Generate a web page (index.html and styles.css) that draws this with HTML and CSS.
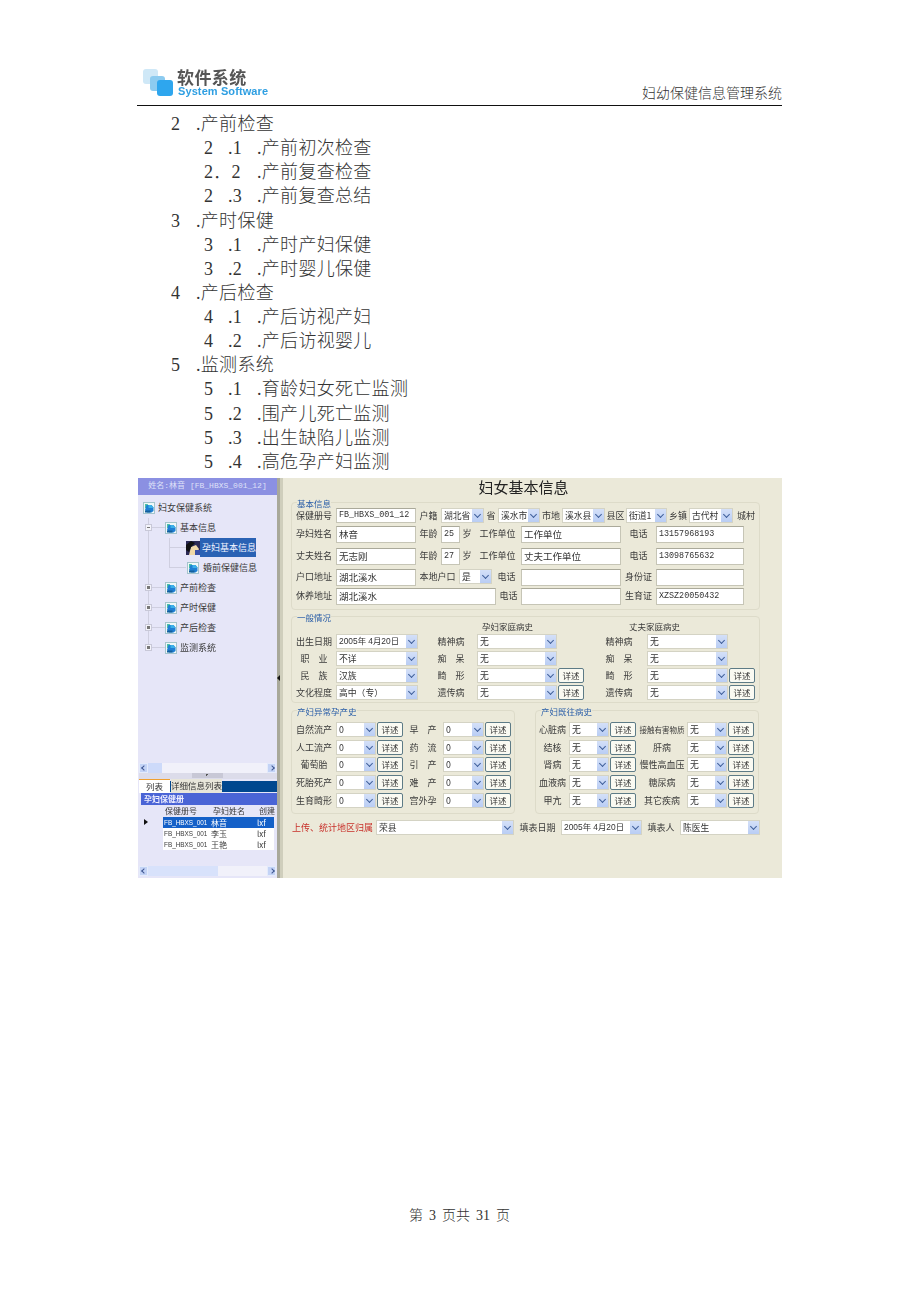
FILE: index.html
```html
<!DOCTYPE html>
<html>
<head>
    <meta charset="UTF-8">
    <title>妇幼保健信息管理系统</title>
    <link rel="stylesheet" href="styles.css">
</head>
<body>
<svg class="defs" width="0" height="0">
    <symbol id="node" viewBox="0 0 12 12">
        <rect x="0.5" y="0.5" width="11" height="11" fill="#f0f8f8" stroke="#a4c4cc"/>
        <path d="M2 2h3l-1 4h-2z" fill="#4cc0a8"/>
        <path d="M3.5 3h5l2 2.5v3.5l-2 1.5h-4.500l-2-2.500z" fill="#1f7fd4"/>
        <path d="M5.500 3h3l2 3h-5z" fill="#3bb0e8"/>
        <path d="M2 8.500h5.500v2h-5.500z" fill="#14609c"/>
    </symbol>
</svg>
<div class="page">
    <header class="top">
        <div class="logo">
            <svg class="logo-mark" width="30" height="28" viewBox="0 0 30 28">
                <rect x="0" y="0" width="15" height="15" rx="3" fill="#cfe8f7"/>
                <rect x="7" y="7" width="15" height="15" rx="3" fill="#8ccbf0"/>
                <rect x="14" y="11" width="16" height="16" rx="3" fill="#2ea6ee"/>
            </svg>
            <div class="logo-text">
                <div class="logo-cn">软件系统</div>
                <div class="logo-en">System Software</div>
            </div>
        </div>
        <div class="sys-name">妇幼保健信息管理系统</div>
    </header>

    <ul class="toc">
        <li class="lv1"><span class="no">2</span>.产前检查</li>
        <li class="lv2"><span class="no">2</span><span class="sec">.1</span>.产前初次检查</li>
        <li class="lv2"><span class="no-wide">2．2</span>.产前复查检查</li>
        <li class="lv2"><span class="no">2</span><span class="sec">.3</span>.产前复查总结</li>
        <li class="lv1"><span class="no">3</span>.产时保健</li>
        <li class="lv2"><span class="no">3</span><span class="sec">.1</span>.产时产妇保健</li>
        <li class="lv2"><span class="no">3</span><span class="sec">.2</span>.产时婴儿保健</li>
        <li class="lv1"><span class="no">4</span>.产后检查</li>
        <li class="lv2"><span class="no">4</span><span class="sec">.1</span>.产后访视产妇</li>
        <li class="lv2"><span class="no">4</span><span class="sec">.2</span>.产后访视婴儿</li>
        <li class="lv1"><span class="no">5</span>.监测系统</li>
        <li class="lv2"><span class="no">5</span><span class="sec">.1</span>.育龄妇女死亡监测</li>
        <li class="lv2"><span class="no">5</span><span class="sec">.2</span>.围产儿死亡监测</li>
        <li class="lv2"><span class="no">5</span><span class="sec">.3</span>.出生缺陷儿监测</li>
        <li class="lv2"><span class="no">5</span><span class="sec">.4</span>.高危孕产妇监测</li>
    </ul>

    <div class="shot">
        <aside class="side">
            <div class="side-title">姓名:林音 [FB_HBXS_001_12]</div>
            <div class="tree">
                <div class="node root"><svg class="ico"><use href="#node"/></svg>妇女保健系统</div>
                <div class="branches">
                    <div class="node"><i class="exp minus"></i><i class="dash"></i><svg class="ico"><use href="#node"/></svg>基本信息</div>
                    <div class="leaves">
                        <div class="node">
                            <i class="dash long"></i>
                            <svg class="photo" width="14" height="14" viewBox="0 0 14 14">
                                <rect width="14" height="14" fill="#2b2a55"/>
                                <path d="M3 14 L5 6 L10 4 L13 8 L10 14z" fill="#f0d8a8"/>
                                <path d="M0 4 L5 0 L9 2 L5 6 L3 11 L0 9z" fill="#111"/>
                                <path d="M9 9 L14 9 L14 14 L9 14z" fill="#3a4fa8"/>
                            </svg>
                            <span class="leaf on">孕妇基本信息</span>
                        </div>
                        <div class="node">
                            <i class="dash long"></i><svg class="ico"><use href="#node"/></svg>
                            <span class="leaf">婚前保健信息</span>
                        </div>
                    </div>
                    <div class="node"><i class="exp"></i><i class="dash"></i><svg class="ico"><use href="#node"/></svg>产前检查</div>
                    <div class="node"><i class="exp"></i><i class="dash"></i><svg class="ico"><use href="#node"/></svg>产时保健</div>
                    <div class="node"><i class="exp"></i><i class="dash"></i><svg class="ico"><use href="#node"/></svg>产后检查</div>
                    <div class="node"><i class="exp"></i><i class="dash"></i><svg class="ico"><use href="#node"/></svg>监测系统</div>
                </div>
            </div>
            <div class="hbar"><i class="hbtn left"></i><i class="thumb short"></i><i class="hbtn right"></i></div>
            <div class="grip"><i class="grip-bar"></i></div>
            <div class="tabs">
                <span class="tab on">列表</span>
                <span class="tab">详细信息列表</span>
            </div>
            <div class="list-title">孕妇保健册</div>
            <div class="list">
                <div class="li head"><span></span><span>保健册号</span><span>孕妇姓名</span><span>创建</span></div>
                <div class="li sel-row"><i class="mark"></i><span class="id">FB_HBXS_001</span><span>林音</span><span>lxf</span></div>
                <div class="li"><span></span><span class="id">FB_HBXS_001</span><span>李玉</span><span>lxf</span></div>
                <div class="li"><span></span><span class="id">FB_HBXS_001</span><span>王艳</span><span>lxf</span></div>
            </div>
            <div class="hbar low"><i class="hbtn left"></i><i class="thumb long"></i><i class="hbtn right"></i></div>
        </aside>

        <div class="split"><i class="split-arrow"></i></div>

        <main class="form">
            <h1 class="form-title">妇女基本信息</h1>

            <fieldset class="group basic">
                <legend>基本信息</legend>
                <div class="row r-place">
                    <label>保健册号</label><div class="box mono">FB_HBXS_001_12</div>
                    <label>户籍</label><div class="sel">湖北省</div>
                    <label>省</label><div class="sel">溪水市</div>
                    <label>市地</label><div class="sel">溪水县</div>
                    <label>县区</label><div class="sel">街道1</div>
                    <label>乡镇</label><div class="sel">古代村</div>
                    <label>城村</label>
                </div>
                <div class="row r-person">
                    <label>孕妇姓名</label><div class="box">林音</div>
                    <label>年龄</label><div class="box mono">25</div>
                    <label>岁</label>
                    <label>工作单位</label><div class="box">工作单位</div>
                    <label>电话</label><div class="box mono">13157968193</div>
                </div>
                <div class="row r-person">
                    <label>丈夫姓名</label><div class="box">无志刚</div>
                    <label>年龄</label><div class="box mono">27</div>
                    <label>岁</label>
                    <label>工作单位</label><div class="box">丈夫工作单位</div>
                    <label>电话</label><div class="box mono">13098765632</div>
                </div>
                <div class="row r-home">
                    <label>户口地址</label><div class="box">湖北溪水</div>
                    <label>本地户口</label><div class="sel">是</div>
                    <label>电话</label><div class="box"></div>
                    <label>身份证</label><div class="box"></div>
                </div>
                <div class="row r-rest">
                    <label>休养地址</label><div class="box">湖北溪水</div>
                    <label>电话</label><div class="box"></div>
                    <label>生育证</label><div class="box mono">XZSZ20050432</div>
                </div>
            </fieldset>

            <fieldset class="group general">
                <legend>一般情况</legend>
                <div class="family-head">
                    <span class="fh-wife">孕妇家庭病史</span>
                    <span class="fh-man">丈夫家庭病史</span>
                </div>
                <div class="row r-family">
                    <label>出生日期</label><div class="sel date">2005年 4月20日</div>
                    <label class="ill">精神病</label><div class="sel">无</div><span></span>
                    <label class="ill">精神病</label><div class="sel">无</div><span></span>
                </div>
                <div class="row r-family">
                    <label>职　业</label><div class="sel">不详</div>
                    <label class="ill">痴　呆</label><div class="sel">无</div><span></span>
                    <label class="ill">痴　呆</label><div class="sel">无</div><span></span>
                </div>
                <div class="row r-family">
                    <label>民　族</label><div class="sel">汉族</div>
                    <label class="ill">畸　形</label><div class="sel">无</div><button class="more">详述</button>
                    <label class="ill">畸　形</label><div class="sel">无</div><button class="more">详述</button>
                </div>
                <div class="row r-family">
                    <label>文化程度</label><div class="sel">高中（专）</div>
                    <label class="ill">遗传病</label><div class="sel">无</div><button class="more">详述</button>
                    <label class="ill">遗传病</label><div class="sel">无</div><button class="more">详述</button>
                </div>
            </fieldset>

            <div class="pair">
                <fieldset class="group history">
                    <legend>产妇异常孕产史</legend>
                    <div class="row r-left"><label>自然流产</label><div class="sel">0</div><button class="more">详述</button><label>早　产</label><div class="sel">0</div><button class="more">详述</button></div>
                    <div class="row r-left"><label>人工流产</label><div class="sel">0</div><button class="more">详述</button><label>药　流</label><div class="sel">0</div><button class="more">详述</button></div>
                    <div class="row r-left"><label>葡萄胎</label><div class="sel">0</div><button class="more">详述</button><label>引　产</label><div class="sel">0</div><button class="more">详述</button></div>
                    <div class="row r-left"><label>死胎死产</label><div class="sel">0</div><button class="more">详述</button><label>难　产</label><div class="sel">0</div><button class="more">详述</button></div>
                    <div class="row r-left"><label>生育畸形</label><div class="sel">0</div><button class="more">详述</button><label>宫外孕</label><div class="sel">0</div><button class="more">详述</button></div>
                </fieldset>
                <fieldset class="group history">
                    <legend>产妇既往病史</legend>
                    <div class="row r-right"><label>心脏病</label><div class="sel">无</div><button class="more">详述</button><label class="tiny">接触有害物质</label><div class="sel">无</div><button class="more">详述</button></div>
                    <div class="row r-right"><label>结核</label><div class="sel">无</div><button class="more">详述</button><label>肝病</label><div class="sel">无</div><button class="more">详述</button></div>
                    <div class="row r-right"><label>肾病</label><div class="sel">无</div><button class="more">详述</button><label>慢性高血压</label><div class="sel">无</div><button class="more">详述</button></div>
                    <div class="row r-right"><label>血液病</label><div class="sel">无</div><button class="more">详述</button><label>糖尿病</label><div class="sel">无</div><button class="more">详述</button></div>
                    <div class="row r-right"><label>甲亢</label><div class="sel">无</div><button class="more">详述</button><label>其它疾病</label><div class="sel">无</div><button class="more">详述</button></div>
                </fieldset>
            </div>

            <div class="row r-bottom">
                <label class="red">上传、统计地区归属</label><div class="sel">荣县</div>
                <label>填表日期</label><div class="sel date">2005年 4月20日</div>
                <label>填表人</label><div class="sel">陈医生</div>
            </div>
        </main>
    </div>

    <footer class="foot">第 3 页共 31 页</footer>
</div>
</body>
</html>
```

FILE: styles.css
```css
* {
    box-sizing: border-box;
}
body {
    margin: 0;
    background-color: #fff;
    font-family: "Liberation Serif", "Noto Sans CJK SC", serif;
}
.defs {
    display: block;
    height: 0;
}
.page {
    width: 920px;
    height: 1302px;
    padding: 0 138px 0 137px;
    display: flex;
    flex-direction: column;
}

/* page header */
.top {
    height: 106px;
    flex: none;
    border-bottom: 1px solid #111;
    display: flex;
    justify-content: space-between;
    align-items: flex-end;
}
.logo {
    display: flex;
    margin: 0 0 8px 6px;
    filter: blur(0.3px);
}
.logo-mark {
    margin-right: 4px;
    align-self: flex-end;
}
.logo-cn {
    font: bold 17px/17px "Noto Sans CJK SC", sans-serif;
    color: #555;
    letter-spacing: 0.4px;
}
.logo-en {
    font: bold 11px/12px "Liberation Sans", sans-serif;
    color: #2f9fe2;
    letter-spacing: 0.1px;
    margin-left: 1px;
}
.sys-name {
    font-size: 14px;
    font-weight: 300;
    line-height: 20px;
    color: #333;
    margin-bottom: 1px;
}

/* numbered list */
.toc {
    list-style: none;
    margin: 6px 0 4px;
    padding: 0;
    font-size: 18px;
    font-weight: 300;
    letter-spacing: 0.3px;
    line-height: 24.13px;
    color: #333;
}
.toc li {
    display: flex;
    white-space: nowrap;
}
.lv1 {
    padding-left: 34px;
}
.lv1 .no {
    width: 25px;
}
.lv2 {
    padding-left: 67px;
}
.lv2 .no {
    width: 24px;
}
.sec {
    width: 29px;
}
.no-wide {
    width: 53px;
}

/* embedded application screenshot */
.shot {
    flex: none;
    width: 643px;
    height: 400px;
    margin-left: 1px;
    display: flex;
    font-family: "Noto Sans CJK SC", sans-serif;
    font-size: 9px;
    color: #3a3a3a;
    filter: blur(0.3px);
}

/* left panel */
.side {
    width: 139px;
    flex: none;
    padding-left: 1px;
    background-color: #e6e6f8;
    display: flex;
    flex-direction: column;
}
.side-title {
    height: 17px;
    line-height: 16px;
    margin-left: -1px;
    text-align: center;
    background-color: #8b90e2;
    color: #dfe0f8;
    font-size: 8px;
    font-family: "Liberation Mono", "Noto Sans CJK SC", monospace;
}
.tree {
    height: 268px;
    flex: none;
    padding-top: 3px;
}
.node {
    height: 20px;
    display: flex;
    align-items: center;
    white-space: nowrap;
}
.root {
    padding-left: 4px;
}
.ico {
    width: 12px;
    height: 12px;
    flex: none;
    margin-right: 3px;
}
.branches {
    margin-left: 9px;
    background: linear-gradient(#cfcfe0, #cfcfe0) 0 0 / 1px calc(100% - 10px) no-repeat;
}
.leaves {
    margin-left: 21px;
    background: linear-gradient(#cfcfe0, #cfcfe0) 0 0 / 1px calc(100% - 10px) no-repeat;
}
.exp {
    width: 7px;
    height: 7px;
    margin-left: -3px;
    flex: none;
    border: 1px solid #c8c8d8;
    background: linear-gradient(#777, #777) center / 3px 3px no-repeat #f4f4fa;
}
.exp.minus {
    background: linear-gradient(#777, #777) center / 3px 1px no-repeat #f4f4fa;
}
.dash {
    width: 13px;
    height: 1px;
    flex: none;
    background-color: #cfcfe0;
}
.dash.long {
    width: 17px;
}
.photo {
    flex: none;
}
.leaves .ico {
    margin: 0 1px 0 1px;
}
.leaf {
    margin-left: 1px;
    padding: 0 2px;
    height: 19px;
    line-height: 19px;
}
.leaf.on {
    width: 56px;
    margin-left: 0;
    background-color: #2a62b4;
    color: #f2f4ff;
}
.hbar {
    height: 10px;
    flex: none;
    margin-right: 1px;
    background-color: #f1f1fa;
    display: flex;
    justify-content: space-between;
}
.hbtn {
    width: 9px;
    background-color: #c3d3f6;
    border: 1px solid #e4ebfb;
    display: flex;
    align-items: center;
    justify-content: center;
}
.hbtn::after {
    content: "";
    width: 3px;
    height: 3px;
    border-left: 1px solid #3d5590;
    border-bottom: 1px solid #3d5590;
    transform: rotate(45deg);
}
.hbtn.right::after {
    transform: rotate(225deg);
}
.thumb {
    background-color: #cddafa;
    margin-right: auto;
}
.thumb.short {
    width: 14px;
}
.thumb.long {
    width: 70px;
    background-color: #d8e2fb;
}
.grip {
    height: 6px;
    flex: none;
    background-color: #dcdcea;
    display: flex;
    justify-content: center;
    padding-right: 1px;
}
.grip-bar {
    width: 31px;
    height: 5px;
    background: linear-gradient(135deg, #555 50%, transparent 50%) center 1px / 3px 3px no-repeat #c8c8d6;
}
.tabs {
    height: 14px;
    flex: none;
    background: linear-gradient(#00478f, #00478f) 0 2px / 100% 11px no-repeat;
    display: flex;
    font-size: 8.5px;
    line-height: 13px;
}
.tab {
    width: 51px;
    margin-left: 1px;
    text-align: center;
    background-color: #e8e6da;
    color: #333;
}
.tab.on {
    width: 31px;
    margin-left: 0;
    background-color: #fff;
    border-top: 1px solid #f0a030;
}
.list-title {
    height: 12px;
    flex: none;
    margin-left: 2px;
    padding-left: 3px;
    background-color: #4a64d6;
    color: #eef;
    font-weight: bold;
    font-size: 8px;
    line-height: 12px;
}
.list {
    flex: 1;
}
.li {
    display: grid;
    grid-template-columns: 24px 48px 46px 17px;
    height: 11px;
    line-height: 11px;
    font-size: 8px;
    white-space: nowrap;
}
.li.head {
    height: 12px;
    line-height: 12px;
}
.li span:nth-child(n+2) {
    background-color: #fff;
}
.li.head span:nth-child(n+2) {
    padding-left: 2px;
    background-color: transparent;
}
.li .id {
    font: 6.4px/11px "Liberation Sans", sans-serif;
    padding-left: 1px;
}
.sel-row span:nth-child(n+2) {
    background-color: #1460c8;
    color: #fff;
}
.mark {
    width: 0;
    height: 0;
    margin: 2px 0 0 5px;
    border-left: 4px solid #111;
    border-top: 3.5px solid transparent;
    border-bottom: 3.5px solid transparent;
}
.hbar.low {
    margin-bottom: 2px;
}

/* splitter */
.split {
    width: 6px;
    flex: none;
    background: linear-gradient(90deg, #a8a89a 0, #a8a89a 3px, #cfcebc 3px);
    display: flex;
    align-items: center;
}
.split-arrow {
    width: 0;
    height: 0;
    border-right: 3px solid #111;
    border-top: 3px solid transparent;
    border-bottom: 3px solid transparent;
}

/* form pane */
.form {
    flex: 1;
    padding: 0 22px 0 8px;
    background-color: #ebe9d9;
}
.form-title {
    height: 20px;
    margin: 0;
    padding-right: 4px;
    font-size: 15px;
    font-weight: normal;
    line-height: 18px;
    text-align: center;
    color: #222;
}
.group {
    margin: 0;
    padding: 0;
    min-width: 0;
    border: 1px solid #dddbc9;
    border-radius: 4px;
}
.group legend {
    margin-left: 5px;
    padding: 0;
    height: 10px;
    line-height: 10px;
    color: #2a5ea8;
    font-size: 8.5px;
}
.basic {
    height: 112px;
    margin-bottom: 2px;
    display: grid;
    grid-template-rows: 18px 22px 21px 19px 18px;
}
.general {
    margin-bottom: 3px;
    height: 91px;
}
.family-head {
    height: 12px;
    line-height: 9px;
    font-size: 8.5px;
    display: grid;
    grid-template-columns: 190px 147px;
    white-space: nowrap;
}
.fh-wife {
    grid-column: 2;
}
.fh-man {
    grid-column: 3;
}
.pair {
    display: grid;
    grid-template-columns: 224px 224px;
    gap: 20px;
    margin-bottom: 6px;
}
.history {
    height: 108px;
    padding-top: 6px;
    display: grid;
    grid-template-rows: 18px 17px 18px 18px 18px;
    align-content: start;
}

/* form rows: label slots sit between the controls */
.row {
    display: grid;
    align-items: start;
    height: 17px;
}
.row label {
    text-align: center;
    white-space: nowrap;
    line-height: 15px;
}
.r-place {
    grid-template-columns: 44px 80px 25px 43px 14px 42px 22px 43px 21px 41px 22px 44px 26px;
}
.r-person {
    grid-template-columns: 44px 80px 25px 19px 14px 47px 100px 35px 88px;
}
.r-home {
    grid-template-columns: 44px 80px 43px 33px 29px 100px 35px 88px;
}
.r-rest {
    grid-template-columns: 44px 160px 25px 100px 35px 88px;
}
.r-family {
    grid-template-columns: 44px 82px 59px 80px 27px 63px 81px 27px;
    height: 15px;
    margin-bottom: 2px;
}
.row label.ill {
    padding-left: 7px;
}
.r-left {
    grid-template-columns: 44px 40px 27px 40px 41px 27px;
}
.r-right {
    grid-template-columns: 33px 40px 28px 50px 40px 28px;
}
.r-bottom {
    grid-template-columns: 85px 138px 47px 81px 38px 80px;
    height: 15px;
    margin-right: -1px;
}
.r-bottom label.red {
    color: #c8302a;
    text-align: left;
    padding-left: 1px;
}
.row label.tiny {
    font-size: 7.5px;
}

/* controls */
.box {
    height: 17px;
    line-height: 14px;
    padding-left: 2px;
    background-color: #fff;
    border: 1px solid #c6c5b6;
    border-top-color: #aaa99a;
    font-size: 9.5px;
    color: #333;
    white-space: nowrap;
    overflow: hidden;
}
.basic .r-place .box {
    height: 15px;
    line-height: 12px;
}
.mono {
    font-family: "Liberation Mono", "Noto Sans CJK SC", monospace;
    font-size: 8.4px;
}
.sel {
    height: 15px;
    line-height: 13px;
    padding: 0 12px 0 2px;
    position: relative;
    background-color: #fff;
    border: 1px solid #d4d3c4;
    font-size: 8.8px;
    color: #333;
    white-space: nowrap;
    overflow: hidden;
}
.sel::after {
    content: "";
    position: absolute;
    top: 0;
    right: 0;
    bottom: 0;
    width: 11px;
    background: linear-gradient(#d4e0f8, #b9cdf4);
}
.sel::before {
    content: "";
    position: absolute;
    z-index: 1;
    top: 3px;
    right: 3.5px;
    width: 4px;
    height: 4px;
    border-right: 1.5px solid #3f5f9a;
    border-bottom: 1.5px solid #3f5f9a;
    transform: rotate(45deg);
}
.date {
    font-family: "Liberation Sans", "Noto Sans CJK SC", sans-serif;
    font-size: 8.4px;
}
.more {
    width: 26px;
    height: 15px;
    margin: 0 0 0 1px;
    padding: 0;
    background-color: #fafaf2;
    border: 1px solid #5d7b86;
    border-radius: 2px;
    font: 8.5px/13px "Noto Sans CJK SC", sans-serif;
    color: #333;
}

/* page footer */
.foot {
    margin-top: auto;
    margin-bottom: 78px;
    text-align: center;
    font-size: 14px;
    font-weight: 300;
    line-height: 16px;
    word-spacing: 2.5px;
    color: #333;
}
```
